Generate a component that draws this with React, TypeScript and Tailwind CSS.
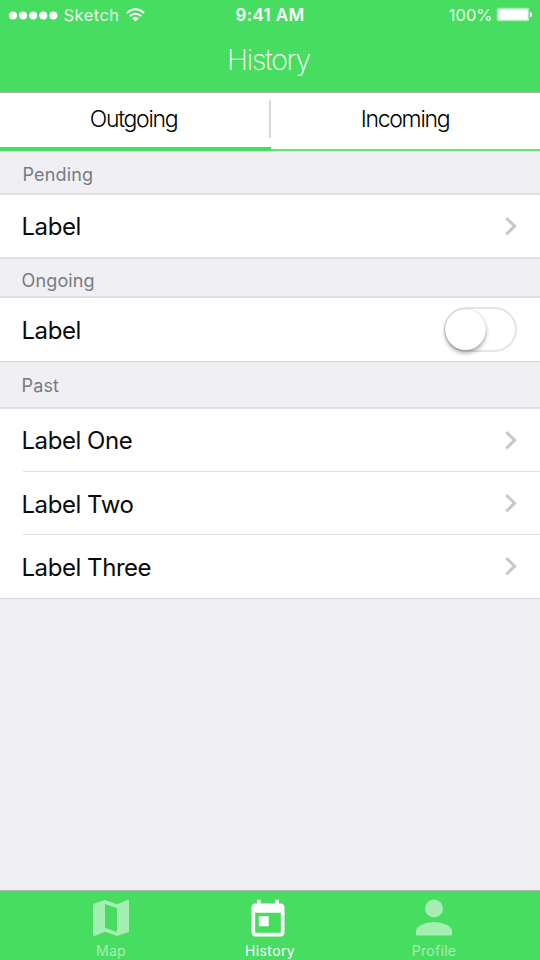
import type { ReactNode } from "react";

function Chevron() {
  return (
    <svg className="mr-[22px] mb-px h-[20px] w-[13px]" viewBox="0 0 13 20" fill="none" stroke="#c7c7cc" strokeWidth="3">
      <path d="M1.3 2.1 9.7 10.2 1.3 18.3" />
    </svg>
  );
}

function Toggle() {
  return (
    <button aria-label="Toggle" className="mr-[23px] flex h-[45px] w-[73px] items-center rounded-full border-2 border-[#e5e5e5] bg-white">
      <span className="-ml-px h-[41px] w-[41px] rounded-full bg-white shadow-[0_0_1px_rgba(0,0,0,0.3),0_3px_4px_rgba(0,0,0,0.33)]" />
    </button>
  );
}

function SectionTitle({ className, children }: { className: string; children: ReactNode }) {
  return (
    <h2 className={`flex items-center border-b-2 border-[#e0e0e2] text-[18px] tracking-[0.15px] text-[#7b7b80] ${className}`}>
      {children}
    </h2>
  );
}

function Row({ label, className, children }: { label: string; className: string; children: ReactNode }) {
  return (
    <div className={`flex items-center justify-between bg-white text-[24px] text-[#0b0b0b] ${className}`}>
      <span className="mt-[2px] ml-[21.5px] tracking-[-0.45px]">{label}</span>
      {children}
    </div>
  );
}

function StatusBar() {
  return (
    <div className="flex h-[30px] items-center text-[17px] leading-[30px]">
      <div className="flex w-[180px] items-center">
        <svg className="ml-[9px] h-[9px] w-[50px]" viewBox="0 0 50 9" fill="white">
          {[4, 14.1, 24.2, 34.3, 44.4].map((x) => (
            <circle key={x} cx={x} cy="4.5" r="4" />
          ))}
        </svg>
        <span className="ml-[4.5px] w-[57.5px] text-[16.5px] tracking-[0.45px] opacity-90">Sketch</span>
        <svg className="ml-[5px] h-[14px] w-[19px]" viewBox="0 0 19 14" fill="none" stroke="white" strokeWidth="2">
          <path d="M.9 4.9Q9.5-2.5 18.1 4.9M3.8 8.1Q9.5 3.3 15.2 8.1" />
          <path d="M6.2 10.3Q9.5 7.5 12.8 10.3L9.5 13.5Z" fill="white" stroke="none" />
        </svg>
      </div>
      <span className="w-[180px] text-center text-[17px] font-semibold tracking-[0.35px]">9:41 AM</span>
      <div className="flex w-[180px] items-center justify-end">
        <span className="mr-[3.5px] text-[16.5px] opacity-90">100%</span>
        <svg className="mr-[7px] mb-px h-[15px] w-[37px]" viewBox="0 0 37 15">
          <rect x=".7" y=".7" width="32.6" height="13.6" rx="2" fill="white" fillOpacity=".5" />
          <rect x="2.3" y="2.3" width="29.4" height="10.4" rx=".5" fill="white" />
          <path d="M34 5h.8q1.2.6 1.2 2.5T34.8 10H34Z" fill="white" />
        </svg>
      </div>
    </div>
  );
}

export default function App() {
  return (
    <div className="flex h-[960px] w-[540px] flex-col overflow-hidden bg-[#efeff4] font-[Inter,sans-serif]">
      <header className="h-[93px] border-b border-[#a9b8ad] bg-[#47dd60] text-white">
        <StatusBar />
        <h1 className="pr-[3px] text-center text-[28.5px] leading-[60px] font-extralight tracking-[-1.3px]">History</h1>
      </header>

      <nav className="flex h-[58px] bg-white text-[23px] font-light tracking-[-1.3px] text-black">
        <button className="flex w-[271px] justify-between border-b-4 border-[#47dd60]">
          <span className="w-[267px] text-center leading-[52px]">Outgoing</span>
          <span className="mt-[7px] h-[38px] w-[2px] bg-[#d8d8d8]" />
        </button>
        <button className="w-[269px] border-b-2 border-[#68e37c] pr-px leading-[52px]">
          <span className="block h-[56px]">Incoming</span>
        </button>
      </nav>

      <main className="flex-1">
        <SectionTitle className="h-[44px] pt-[5px] pl-[22.5px]">Pending</SectionTitle>
        <Row label="Label" className="h-[64px] border-b-2 border-[#e0e0e2]"><Chevron /></Row>
        <SectionTitle className="h-[39px] pt-[5px] pl-[21.5px]">Ongoing</SectionTitle>
        <Row label="Label" className="h-[64px] border-b border-[#d9d9dc]"><Toggle /></Row>
        <SectionTitle className="h-[47px] pt-px pl-[21.5px]">Past</SectionTitle>
        <Row label="Label One" className="h-[62px]"><Chevron /></Row>
        <div className="bg-white pl-[23px]"><div className="h-px bg-[#e1e1e3]" /></div>
        <Row label="Label Two" className="h-[62px] pt-px"><Chevron /></Row>
        <div className="bg-white pl-[23px]"><div className="h-px bg-[#e1e1e3]" /></div>
        <Row label="Label Three" className="h-[64px] border-b border-[#d9d9dc]"><Chevron /></Row>
      </main>

      <footer className="flex h-[70px] border-t border-[#a9b8ad] bg-[#47dd60] pl-[30px] text-[14px] leading-[18px] tracking-[0.3px] text-white">
        <button className="flex w-[162px] flex-col items-center opacity-50">
          <svg className="mt-[3px] h-[48px] w-[48px]" viewBox="0 0 24 24" fill="currentColor">
            <path d="M20.5 3l-.16.03L15 5.1 9 3 3.36 4.9c-.21.07-.36.25-.36.48V20.5c0 .28.22.5.5.5l.16-.03L9 18.9l6 2.1 5.64-1.9c.21-.07.36-.25.36-.48V3.5c0-.28-.22-.5-.5-.5zM15 19l-6-2.11V5l6 2.11V19z" />
          </svg>
          <span>Map</span>
        </button>
        <button className="flex w-[156px] flex-col items-center">
          <svg className="mt-[7px] mr-[4px] h-[44px] w-[44px]" viewBox="0 0 24 24" fill="currentColor">
            <path d="M19 3h-1V1h-2v2H8V1H6v2H5c-1.11 0-1.99.9-1.99 2L3 19c0 1.1.89 2 2 2h14c1.1 0 2-.9 2-2V5c0-1.1-.9-2-2-2zm0 16H5V8h14v11zM7 10h5.4v5.4H7z" />
          </svg>
          <span className="tracking-[0.4px]">History</span>
        </button>
        <button className="flex w-[172px] flex-col items-center opacity-50">
          <svg className="mt-[8px] h-[37px] w-[36px]" viewBox="0 0 36 37" fill="currentColor">
            <circle cx="18" cy="9.5" r="9" />
            <path d="M18 23C12 23 0 26 0 32v4.5h36V32c0-6-12-9-18-9z" />
          </svg>
          <span className="mt-[6px]">Profile</span>
        </button>
      </footer>
    </div>
  );
}
